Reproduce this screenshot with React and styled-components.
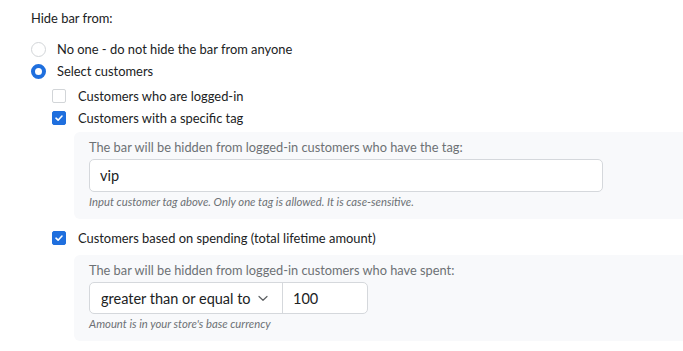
import React from 'react'
import styled, { createGlobalStyle } from 'styled-components'

const Global = createGlobalStyle`
html, body {
  margin: 0;
  background: #ffffff;
  overflow: hidden;
}
body {
  font-family: Lato, "Open Sans", sans-serif;
  font-size: 12.9px;
  color: #202223;
}
`

const App = () => {
  return (
    <Page>
      <Global />
      <Title>Hide bar from:</Title>

      <RadioRow>
        <Radio />
        <span>No one - do not hide the bar from anyone</span>
      </RadioRow>
      <RadioRow>
        <Radio checked />
        <span>Select customers</span>
      </RadioRow>

      <Options>
        <CheckRow>
          <Checkbox />
          <span>Customers who are logged-in</span>
        </CheckRow>
        <CheckRow>
          <Checkbox checked>
            <Tick />
          </Checkbox>
          <span>Customers with a specific tag</span>
        </CheckRow>
        <Panel>
          <PanelLabel>The bar will be hidden from logged-in customers who have the tag:</PanelLabel>
          <TextInput>vip</TextInput>
          <Help>Input customer tag above. Only one tag is allowed. It is case-sensitive.</Help>
        </Panel>

        <CheckRow spaced>
          <Checkbox checked>
            <Tick />
          </Checkbox>
          <span>Customers based on spending (total lifetime amount)</span>
        </CheckRow>
        <Panel>
          <PanelLabel>The bar will be hidden from logged-in customers who have spent:</PanelLabel>
          <Group>
            <SelectBox>
              <span>greater than or equal to</span>
              <svg width="12" height="12" viewBox="0 0 12 12" fill="none">
                <path d="M2 4.5 L6 8.3 L10 4.5" stroke="#5c5f62" strokeWidth="1.2" strokeLinecap="round" strokeLinejoin="round" />
              </svg>
            </SelectBox>
            <NumberBox>100</NumberBox>
          </Group>
          <Help>Amount is in your store's base currency</Help>
        </Panel>
      </Options>
    </Page>
  )
}

export default App

const Tick = () => (
  <svg width="10" height="10" viewBox="0 0 10 10" fill="none">
    <path d="M2 5.2 L4.1 7.2 L8 3" stroke="#ffffff" strokeWidth="1.6" strokeLinecap="round" strokeLinejoin="round" />
  </svg>
)

const Page = styled.div`
padding: 7px 0 0 31px;
display: flex;
flex-direction: column;
`
const Title = styled.div`
line-height: 22px;
margin-bottom: 9px;
`
const RadioRow = styled.div`
display: flex;
align-items: center;
height: 22px;
gap: 11px;
`
const Radio = styled.span`
box-sizing: border-box;
width: 15px;
height: 15px;
border-radius: 50%;
background: #ffffff;
border: ${p => (p.checked ? '4.5px solid #1f6fde' : '1px solid #d2d5d8')};
`
const Options = styled.div`
display: flex;
flex-direction: column;
padding-left: 21px;
margin-top: 3px;
`
const CheckRow = styled.div`
display: flex;
align-items: center;
height: 22px;
gap: 12px;
margin-top: ${p => (p.spaced ? '8px' : '0')};
margin-bottom: ${p => (p.spaced ? '3px' : '0')};
`
const Checkbox = styled.span`
box-sizing: border-box;
width: 14px;
height: 14px;
border-radius: 2px;
display: flex;
align-items: center;
justify-content: center;
background: ${p => (p.checked ? '#1f6fde' : '#ffffff')};
border: 1px solid ${p => (p.checked ? '#1f6fde' : '#d2d5d8')};
`
const Panel = styled.div`
margin-left: 22px;
margin-top: 3px;
padding: 5px 15px 9px 15px;
background: #f8f9fb;
border-radius: 6px 0 0 6px;
display: flex;
flex-direction: column;
`
const PanelLabel = styled.div`
font-size: 12.8px;
line-height: 20px;
color: #6d7175;
margin-bottom: 2px;
`
const TextInput = styled.div`
box-sizing: border-box;
width: 514px;
height: 33px;
background: #ffffff;
border: 1px solid #d5d8dc;
border-radius: 5px;
display: flex;
align-items: center;
padding-left: 10px;
font-size: 14.5px;
`
const Help = styled.div`
font-size: 11.3px;
font-style: italic;
color: #6d7175;
line-height: 16px;
margin-top: 2px;
`
const Group = styled.div`
display: flex;
box-sizing: border-box;
width: 279px;
height: 32px;
background: #ffffff;
border: 1px solid #d5d8dc;
border-radius: 5px;
font-size: 14.5px;
`
const SelectBox = styled.div`
width: 193px;
box-sizing: border-box;
display: flex;
align-items: center;
gap: 6px;
padding-left: 11px;
border-right: 1px solid #d5d8dc;
`
const NumberBox = styled.div`
display: flex;
align-items: center;
padding-left: 10px;
`
